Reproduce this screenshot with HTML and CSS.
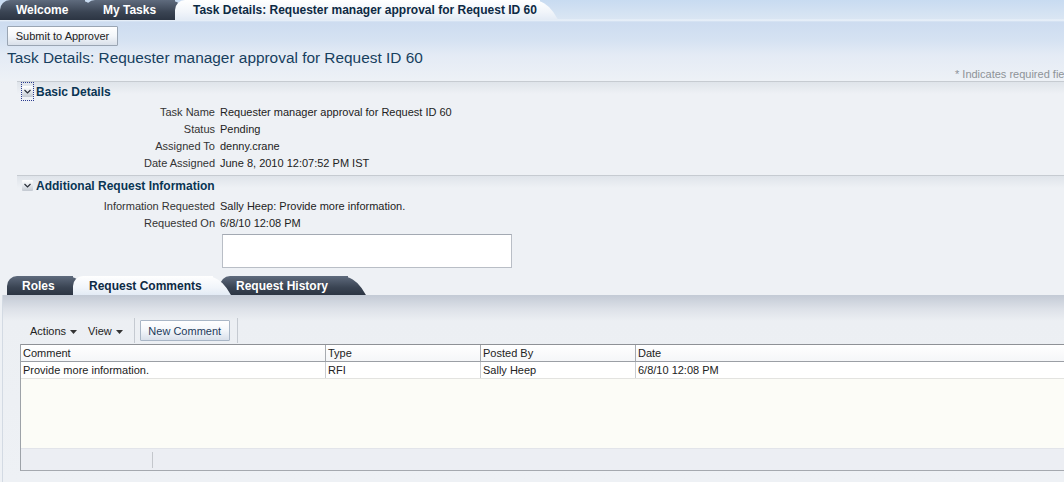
FILE: index.html
```html
<!DOCTYPE html>
<html>
<head>
<meta charset="utf-8">
<link rel="stylesheet" href="styles.css">
</head>
<body>
<div class="top">
  <div class="tabbar">
    <div class="tab dark t1">Welcome</div>
    <div class="tab dark t2">My Tasks</div>
    <div class="tab light t3">Task Details: Requester manager approval for Request ID 60</div>
  </div>
  <div class="toolbar"><button class="btn">Submit to Approver</button></div>
  <h1 class="title">Task Details: Requester manager approval for Request ID 60</h1>
  <div class="required"><span>* Indicates required field</span></div>
</div>

<section class="sec">
  <div class="sec-head">
    <span class="focus"><span class="disclose"><svg width="11" height="11" viewBox="0 0 11 11"><path d="M2.5 4 L5.5 7 L8.5 4" fill="none" stroke="#2a2f38" stroke-width="1.2"/></svg></span></span>
    <span class="sec-title">Basic Details</span>
  </div>
  <div class="fields">
    <div class="lbl">Task Name</div><div class="val">Requester manager approval for Request ID 60</div>
    <div class="lbl">Status</div><div class="val">Pending</div>
    <div class="lbl">Assigned To</div><div class="val">denny.crane</div>
    <div class="lbl">Date Assigned</div><div class="val">June 8, 2010 12:07:52 PM IST</div>
  </div>
</section>

<section class="sec sec2">
  <div class="sec-head">
    <span class="nofocus"><span class="disclose"><svg width="11" height="11" viewBox="0 0 11 11"><path d="M2.5 4 L5.5 7 L8.5 4" fill="none" stroke="#2a2f38" stroke-width="1.2"/></svg></span></span>
    <span class="sec-title">Additional Request Information</span>
  </div>
  <div class="fields">
    <div class="lbl">Information Requested</div><div class="val">Sally Heep: Provide more information.</div>
    <div class="lbl">Requested On</div><div class="val">6/8/10 12:08 PM</div>
    <div class="lbl"></div><div class="val"><div class="textbox"></div></div>
  </div>
</section>

<div class="ptabs">
  <div class="tab dark p1">Roles</div>
  <div class="tab light p2">Request Comments</div>
  <div class="tab dark p3">Request History</div>
</div>
<div class="panel">
  <div class="ptoolbar">
    <span class="menu">Actions <svg width="7" height="4" viewBox="0 0 7 4"><path d="M0 0 H7 L3.5 4 Z" fill="#333"/></svg></span>
    <span class="menu">View <svg width="7" height="4" viewBox="0 0 7 4"><path d="M0 0 H7 L3.5 4 Z" fill="#333"/></svg></span>
    <span class="sep"></span>
    <button class="btn btn2">New Comment</button>
    <span class="sep"></span>
  </div>
  <div class="table">
    <div class="row head">
      <div class="c c1">Comment</div><div class="c c2">Type</div><div class="c c3">Posted By</div><div class="c c4">Date</div>
    </div>
    <div class="row data">
      <div class="c c1">Provide more information.</div><div class="c c2">RFI</div><div class="c c3">Sally Heep</div><div class="c c4">6/8/10 12:08 PM</div>
    </div>
    <div class="empty"></div>
    <div class="tfoot"><span class="fsep"></span></div>
  </div>
</div>
</body>
</html>
```

FILE: styles.css
```css
* { box-sizing: border-box; }
html, body { margin: 0; }
body {
  width: 1064px;
  height: 482px;
  overflow: hidden;
  font-family: "Liberation Sans", Arial, sans-serif;
  font-size: 11px;
  color: #222;
  background: #eef1f5;
}

.top {
  background: linear-gradient(#c8dbf1 0px, #dae6f3 19px, #edf3fa 20px, #cddcf0 22px, #d5e2f2 40px, #e4ebf5 55px, #edf1f6 80px);
}

.tabbar {
  display: flex;
  height: 20px;
  position: relative;
}
.tab {
  position: relative;
  height: 20px;
  line-height: 21px;
  font-weight: bold;
  font-size: 12px;
  white-space: nowrap;
}
.tab::after {
  content: "";
  position: absolute;
  top: 0;
  right: -12px;
  width: 24px;
  height: 100%;
  background: inherit;
  transform: skewX(32deg);
  border-top-right-radius: 12px;
  z-index: -1;
}
.tab.dark {
  color: #fff;
  background: linear-gradient(#5f6b7d, #3a4453 60%, #2c3543);
  border-top-left-radius: 10px;
}
.tab.light {
  color: #0d2a44;
  background: linear-gradient(#ffffff, #f1f5fa 60%, #e3ebf5);
  border-top-left-radius: 10px;
}
.t1 { width: 85px; padding-left: 16px; z-index: 3; border-top-left-radius: 0; }
.t2 { width: 90px; padding-left: 18px; z-index: 2; }
.t3 { width: 365px; padding-left: 18px; z-index: 4; }

.toolbar {
  height: 28px;
  padding: 6px 0 0 7px;
}
.btn {
  height: 20px;
  padding: 0;
  font-family: "Liberation Sans", Arial, sans-serif;
  font-size: 11px;
  color: #222;
  white-space: nowrap;
  border: 1px solid #9aa5b3;
  border-radius: 1px;
  background: linear-gradient(#ffffff, #f3f6fa 50%, #d9e0ea);
  width: 111px;
}

.title {
  margin: 0;
  padding-left: 7px;
  height: 20px;
  line-height: 20px;
  font-size: 15.4px;
  font-weight: normal;
  color: #173f5f;
}
.required {
  display: flex;
  justify-content: flex-end;
  height: 13px;
  line-height: 13px;
  color: #8e9398;
  white-space: nowrap;
  margin-right: -9px;
}

.sec {
  margin-left: 17px;
  border-top: 1px solid #c6cbd1;
  background: linear-gradient(#dfe4ea, #eef1f5 12px);
  padding-bottom: 3px;
}
.sec2 { padding-bottom: 0; }
.sec-head {
  display: flex;
  align-items: center;
  height: 19px;
  margin-bottom: 3px;
}
.focus, .nofocus {
  display: flex;
  align-items: center;
  justify-content: center;
  width: 13px;
  height: 19px;
  margin-left: 4px;
  margin-right: 2px;
}
.focus { border: 1px dotted #2b3b8f; }
.disclose {
  display: block;
  width: 11px;
  height: 11px;
  background: linear-gradient(#ffffff, #e4e8ed 50%, #c3c9d1);
  border-radius: 1px;
}
.disclose svg { display: block; }
.sec-title {
  font-weight: bold;
  font-size: 12px;
  color: #0a3553;
}

.fields {
  display: grid;
  grid-template-columns: 198px auto;
  column-gap: 5px;
  grid-auto-rows: 17px;
  line-height: 17px;
}
.lbl { text-align: right; color: #333; }
.val { color: #222; }
.sec2 .fields { grid-template-rows: 17px 17px 36px; }
.textbox {
  margin: 2px 0 0 2px;
  width: 290px;
  height: 34px;
  background: #fff;
  border: 1px solid #b9bec6;
  border-top-color: #a3a9b2;
}

.ptabs {
  display: flex;
  height: 19px;
  margin-top: 8px;
  padding-left: 7px;
  position: relative;
}
.ptabs .tab { height: 19px; line-height: 20px; }
.p1 { width: 66px; padding-left: 15px; z-index: 1; border-top-left-radius: 6px; }
.p2 { width: 140px; padding-left: 16px; z-index: 3; }
.p3 { width: 128px; padding-left: 16px; z-index: 2; margin-left: 7px; }

.panel {
  height: 187px;
  margin-left: 2px;
  border-left: 1px solid #d3dae3;
  background: linear-gradient(#c3cad5, #dde1e8 14px, #eceff3 26px, #eef1f5);
  padding-top: 23px;
}
.ptoolbar {
  display: flex;
  align-items: center;
  height: 25px;
  padding-left: 27px;
}
.menu {
  display: flex;
  align-items: center;
  gap: 4px;
  color: #222;
  margin-right: 11px;
}
.menu svg { margin-top: 2px; }
.sep {
  width: 1px;
  height: 25px;
  background: #c5cad1;
  margin-right: 5px;
}
.btn2 {
  width: 90px;
  height: 21px;
  color: #1d3a5a;
  border-color: #a9b6c6;
  margin-right: 7px;
}

.table {
  margin-left: 17px;
  margin-right: -10px;
  margin-top: 1px;
  border-left: 1px solid #9da2a8;
  border-bottom: 1px solid #a5a9af;
  background: #fff;
}
.row { display: flex; height: 17px; line-height: 17px; }
.row.head {
  border-top: 1px solid #8e9196;
  border-bottom: 1px solid #9b9fa5;
  height: 18px;
  background: linear-gradient(#ffffff, #f5f6f8);
}
.row.data { border-bottom: 1px solid #e3e3e0; height: 17px; }
.c { padding-left: 2px; color: #222; white-space: nowrap; }
.c1 { width: 304px; }
.c2, .c3, .c4 { border-left: 1px solid #c9ccd0; }
.c2 { width: 155px; }
.c3 { width: 155px; }
.c4 { flex: 1; }
.head .c2, .head .c3, .head .c4 { border-left-color: #a8abb0; }
.empty { height: 69px; background: #fcfcf7; }
.tfoot {
  height: 22px;
  background: #eceef3;
  border-top: 1px solid #e2e4ea;
  position: relative;
}
.fsep {
  position: absolute;
  left: 131px;
  top: 3px;
  width: 1px;
  height: 16px;
  background: #c4c7cc;
}
```
